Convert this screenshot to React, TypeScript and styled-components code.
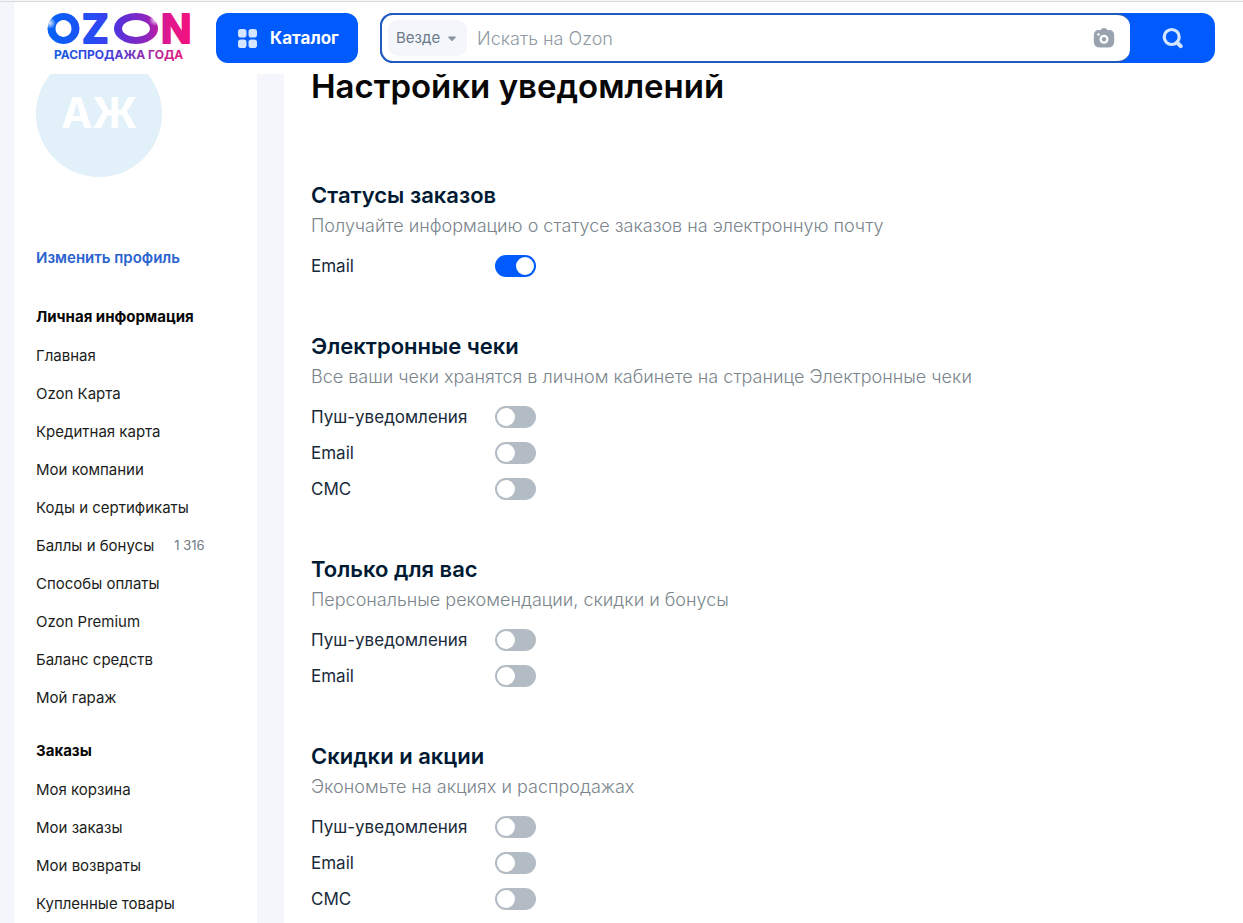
import React, { useState } from "react";
import styled, { createGlobalStyle } from "styled-components";

const GlobalStyle = createGlobalStyle`
  *, *::before, *::after { box-sizing: border-box; }
  body {
    margin: 0;
    background: #f4f6fb;
    color: #001a34;
    font-family: Inter, "Open Sans", sans-serif;
    -webkit-font-smoothing: antialiased;
  }
  button, input, select { font-family: inherit; }
`;

const Page = styled.div`
  height: 100vh;
  display: flex;
  flex-direction: column;
  overflow: hidden;
  padding: 1px 0 0 14px;
  position: relative;

  &::before {
    content: "";
    position: absolute;
    inset: 1px 0 auto 0;
    height: 1px;
    background: #d6dcdb;
    z-index: 2;
  }
`;

const Header = styled.header`
  position: relative;
  z-index: 1;
  flex: none;
  display: flex;
  align-items: flex-start;
  height: 73px;
  padding: 12px 28px 0 32px;
  background: #fff;
`;

const LogoLink = styled.a`
  display: flex;
  flex: none;
  width: 148px;
  margin-right: 22px;
  text-decoration: none;

  svg { overflow: visible; }
`;

const CatalogButton = styled.button`
  flex: none;
  display: flex;
  align-items: center;
  gap: 13px;
  width: 142px;
  height: 50px;
  margin-right: 22px;
  padding: 0 0 0 22px;
  border: 0;
  border-radius: 12px;
  background: #005bff;
  color: #fff;
  font-size: 17px;
  font-weight: 700;
`;

const SearchForm = styled.form`
  flex: 1;
  display: flex;
  height: 50px;
  border-radius: 13px;
  background: #005bff;
`;

const SearchField = styled.div`
  flex: 1;
  min-width: 0;
  display: flex;
  align-items: center;
  padding: 0 15px 0 6px;
  border: solid #1f5bbd;
  border-width: 2px 0 2px 2px;
  border-radius: 13px;
  background: #fff;
`;

const ScopeBox = styled.div`
  position: relative;
  flex: none;
  display: flex;
  align-items: center;
  width: 79px;
  height: 36px;

  svg {
    position: absolute;
    right: 10px;
    top: 16px;
    pointer-events: none;
  }
`;

const ScopeSelect = styled.select`
  appearance: none;
  width: 100%;
  height: 100%;
  padding: 0 8px 2px;
  border: 0;
  border-radius: 10px;
  background: #f4f6fb;
  color: #6b7a88;
  font-size: 15px;
`;

const SearchInput = styled.input`
  flex: 1;
  min-width: 0;
  height: 100%;
  padding: 0 10px;
  border: 0;
  outline: 0;
  background: none;
  font-size: 18px;
  font-weight: 300;
  color: #001a34;

  &::placeholder { color: #8e9aa3; opacity: 1; }
`;

const IconButton = styled.button`
  display: flex;
  padding: 0;
  border: 0;
  background: none;
`;

const SearchButton = styled.button`
  display: flex;
  align-items: center;
  justify-content: center;
  width: 85px;
  padding: 0;
  border: 0;
  background: none;
`;

/* The columns are scrolled a little way under the header. */
const Columns = styled.div`
  flex: 1;
  display: flex;
  align-items: stretch;
  gap: 27px;
  min-height: 0;
  margin-top: -23px;
`;

const Sidebar = styled.aside`
  flex: none;
  width: 243px;
  padding: 0 22px;
  background: #fff;
  overflow: hidden;
`;

const Avatar = styled.div`
  display: flex;
  align-items: center;
  justify-content: center;
  width: 126px;
  height: 126px;
  margin-bottom: 71px;
  padding-bottom: 4px;
  border-radius: 50%;
  background: #e1f0f9;
  color: #fff;
  font-size: 42px;
  font-weight: 700;
`;

const EditLink = styled.a`
  display: block;
  margin-bottom: 30px;
  color: #2a62cf;
  font-size: 15px;
  font-weight: 600;
  line-height: 20px;
  text-decoration: none;
`;

const MenuGroup = styled.nav`
  margin-bottom: 16px;
`;

const MenuTitle = styled.h3`
  margin: 0;
  color: #070707;
  font-size: 15px;
  font-weight: 700;
  line-height: 38px;
`;

const MenuList = styled.ul`
  margin: 0;
  padding: 0;
  list-style: none;
`;

const MenuItem = styled.li`
  display: flex;
  align-items: center;
  gap: 20px;
  height: 38px;
`;

const MenuLink = styled.a`
  color: #1b1d20;
  font-size: 15px;
  text-decoration: none;
  white-space: nowrap;
`;

const MenuCount = styled.span`
  color: #6f7a85;
  font-size: 13px;
`;

const Content = styled.main`
  flex: 1;
  min-width: 0;
  padding: 15px 27px 0;
  background: #fff;
  overflow: hidden;
`;

const PageTitle = styled.h1`
  margin: 0 0 74px;
  color: #070707;
  font-size: 33px;
  font-weight: 600;
  line-height: 40px;
`;

const Section = styled.section`
  margin-bottom: 47px;
`;

const SectionTitle = styled.h2`
  margin: 0;
  font-size: 22px;
  font-weight: 600;
  line-height: 30px;
`;

const SectionText = styled.p`
  margin: 0 0 7px;
  color: #7a858c;
  font-size: 18px;
  font-weight: 300;
  line-height: 31px;
`;

const SwitchRow = styled.label`
  display: grid;
  grid-template-columns: 184px auto;
  justify-content: start;
  align-items: center;
  height: 36px;
  color: #1a2a3a;
  font-size: 17px;
`;

const Switch = styled.input`
  appearance: none;
  display: flex;
  width: 41px;
  height: 22px;
  margin: 0;
  padding: 2px;
  border-radius: 11px;
  background: #b3bcc5;

  &::before {
    content: "";
    width: 18px;
    height: 18px;
    border-radius: 50%;
    background: #fff;
  }

  &:checked {
    justify-content: flex-end;
    background: #005bff;
  }
`;

function Logo() {
  return (
    <svg width="148" height="52" viewBox="0 0 148 52" role="img" aria-label="OZON Распродажа года">
      <defs>
        <linearGradient id="brand" gradientUnits="userSpaceOnUse" x1="0" y1="0" x2="148" y2="0">
          <stop offset="0" stopColor="#0064f5" />
          <stop offset="0.35" stopColor="#2b48f5" />
          <stop offset="0.5" stopColor="#5a30d8" />
          <stop offset="0.68" stopColor="#8f25bd" />
          <stop offset="0.82" stopColor="#e0188f" />
          <stop offset="1" stopColor="#f5117a" />
        </linearGradient>
        <linearGradient id="tagline" gradientUnits="userSpaceOnUse" x1="8" y1="0" x2="140" y2="0">
          <stop offset="0" stopColor="#1b5bdc" />
          <stop offset="0.4" stopColor="#3a3fe0" />
          <stop offset="0.7" stopColor="#962aa8" />
          <stop offset="1" stopColor="#f0187a" />
        </linearGradient>
        <radialGradient id="glow">
          <stop offset="0" stopColor="#fff" stopOpacity="0.85" />
          <stop offset="1" stopColor="#fff" stopOpacity="0" />
        </radialGradient>
      </defs>
      <g fill="url(#brand)" fillRule="evenodd">
        <path d="M17.500 0a16 15.500 0 1 0 0.010 0zM17.500 7a8 8.500 0 1 1-0.010 0z" />
        <path d="M90 0a22 15.500 0 1 0 0.010 0zM90 7a14 8.500 0 1 1-0.010 0z" />
        <g fontSize="40" fontWeight="700" stroke="url(#brand)" strokeWidth="2" strokeLinejoin="round">
          <text x="36" y="30">Z</text>
          <text x="115" y="30">N</text>
        </g>
      </g>
      <circle cx="4" cy="10" r="6" fill="url(#glow)" />
      <circle cx="109" cy="7" r="6" fill="url(#glow)" />
      <text x="8" y="46" fontSize="12" fontWeight="700" fill="url(#tagline)">РАСПРОДАЖА ГОДА</text>
    </svg>
  );
}

function CatalogIcon() {
  return (
    <svg width="19" height="19" viewBox="0 0 19 19" fill="#d5e5ff" aria-hidden="true">
      <rect x="0" y="0" width="8.500" height="8.500" rx="2.800" />
      <rect x="10.500" y="0" width="8.500" height="8.500" rx="2.800" />
      <rect x="0" y="10.500" width="8.500" height="8.500" rx="2.800" />
      <rect x="10.500" y="10.500" width="8.500" height="8.500" rx="2.800" />
    </svg>
  );
}

function CameraIcon() {
  return (
    <svg width="22" height="20" viewBox="0 0 22 20" aria-hidden="true">
      <path
        fill="#98a3ae"
        d="M8 1.500Q8.800 0 10.500 0h1Q13.200 0 14 1.500Q14.300 2 15 2h1q5.200 0 5.200 5.500v6Q21.200 19.500 15 19.500H7Q.800 19.500 .800 13.500v-6Q.800 2 6 2h1q.700 0 1-.500z"
      />
      <circle cx="11" cy="11.300" r="3.400" fill="none" stroke="#fff" strokeWidth="2.200" />
      <circle cx="5.500" cy="6.500" r="1.300" fill="#fff" />
    </svg>
  );
}

function SearchIcon() {
  return (
    <svg width="22" height="22" viewBox="0 0 22 22" fill="none" stroke="#d5e5ff" aria-hidden="true">
      <circle cx="9.700" cy="10" r="7.500" strokeWidth="3.200" />
      <path d="M15 15.500l3.700 3.700" strokeWidth="4" strokeLinecap="round" />
    </svg>
  );
}

type MenuEntry = { label: string; count?: string };

const menu: { title: string; items: MenuEntry[] }[] = [
  {
    title: "Личная информация",
    items: [
      { label: "Главная" },
      { label: "Ozon Карта" },
      { label: "Кредитная карта" },
      { label: "Мои компании" },
      { label: "Коды и сертификаты" },
      { label: "Баллы и бонусы", count: "1 316" },
      { label: "Способы оплаты" },
      { label: "Ozon Premium" },
      { label: "Баланс средств" },
      { label: "Мой гараж" },
    ],
  },
  {
    title: "Заказы",
    items: [
      { label: "Моя корзина" },
      { label: "Мои заказы" },
      { label: "Мои возвраты" },
      { label: "Купленные товары" },
    ],
  },
];

const sections = [
  {
    title: "Статусы заказов",
    text: "Получайте информацию о статусе заказов на электронную почту",
    channels: ["Email"],
    enabled: true,
  },
  {
    title: "Электронные чеки",
    text: "Все ваши чеки хранятся в личном кабинете на странице Электронные чеки",
    channels: ["Пуш-уведомления", "Email", "СМС"],
    enabled: false,
  },
  {
    title: "Только для вас",
    text: "Персональные рекомендации, скидки и бонусы",
    channels: ["Пуш-уведомления", "Email"],
    enabled: false,
  },
  {
    title: "Скидки и акции",
    text: "Экономьте на акциях и распродажах",
    channels: ["Пуш-уведомления", "Email", "СМС"],
    enabled: false,
  },
];

function ChannelSwitch({ label, initial }: { label: string; initial: boolean }) {
  const [on, setOn] = useState(initial);
  return (
    <SwitchRow>
      <span>{label}</span>
      <Switch type="checkbox" role="switch" checked={on} onChange={(e) => setOn(e.target.checked)} />
    </SwitchRow>
  );
}

export default function App() {
  return (
    <Page>
      <GlobalStyle />
      <Header>
        <LogoLink href="#">
          <Logo />
        </LogoLink>
        <CatalogButton type="button">
          <CatalogIcon />
          Каталог
        </CatalogButton>
        <SearchForm role="search" onSubmit={(e) => e.preventDefault()}>
          <SearchField>
            <ScopeBox>
              <ScopeSelect aria-label="Раздел поиска">
                <option>Везде</option>
              </ScopeSelect>
              <svg width="10" height="6" viewBox="0 0 10 6" aria-hidden="true">
                <path d="M1.500 1h7L5 4.800z" fill="#8793a0" stroke="#8793a0" strokeLinejoin="round" />
              </svg>
            </ScopeBox>
            <SearchInput type="text" placeholder="Искать на Ozon" aria-label="Искать на Ozon" />
            <IconButton type="button" aria-label="Поиск по фото">
              <CameraIcon />
            </IconButton>
          </SearchField>
          <SearchButton type="submit" aria-label="Найти">
            <SearchIcon />
          </SearchButton>
        </SearchForm>
      </Header>
      <Columns>
        <Sidebar>
          <Avatar>АЖ</Avatar>
          <EditLink href="#">Изменить профиль</EditLink>
          {menu.map((group) => (
            <MenuGroup key={group.title} aria-label={group.title}>
              <MenuTitle>{group.title}</MenuTitle>
              <MenuList>
                {group.items.map((item) => (
                  <MenuItem key={item.label}>
                    <MenuLink href="#">{item.label}</MenuLink>
                    {item.count && <MenuCount>{item.count}</MenuCount>}
                  </MenuItem>
                ))}
              </MenuList>
            </MenuGroup>
          ))}
        </Sidebar>
        <Content>
          <PageTitle>Настройки уведомлений</PageTitle>
          {sections.map((section) => (
            <Section key={section.title}>
              <SectionTitle>{section.title}</SectionTitle>
              <SectionText>{section.text}</SectionText>
              {section.channels.map((channel) => (
                <ChannelSwitch key={channel} label={channel} initial={section.enabled} />
              ))}
            </Section>
          ))}
        </Content>
      </Columns>
    </Page>
  );
}
